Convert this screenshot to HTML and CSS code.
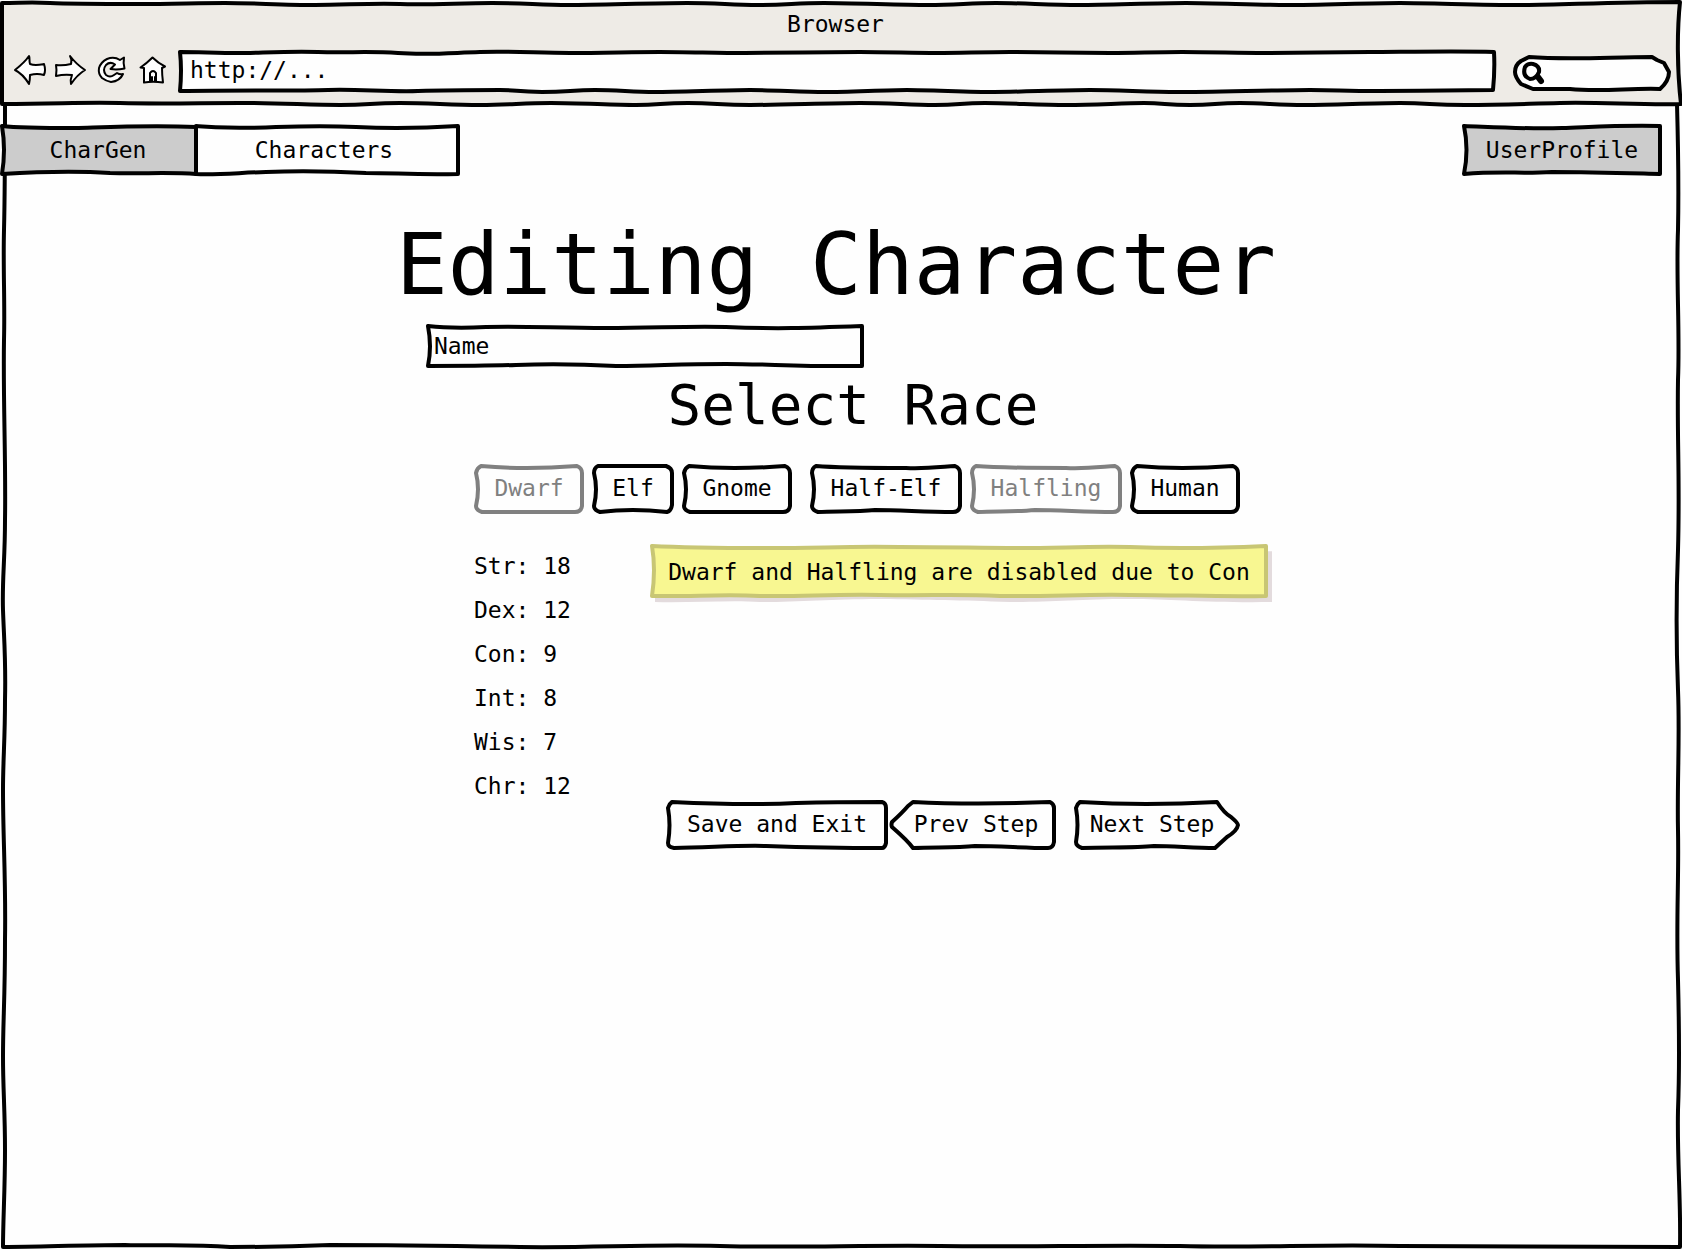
FILE: index.html
```html
<!DOCTYPE html>
<html lang="en">
<head>
<meta charset="utf-8">
<title>Editing Character</title>
<link rel="stylesheet" href="styles.css">
</head>
<body>
<header class="chrome">
  <svg class="sketch chrome-edge" viewBox="0 0 1682 104" preserveAspectRatio="none" aria-hidden="true"><path d="M2 3C20 3 30 2 50 3S110 4 140 4S200 3 225 3S285 5 315 5S370 3 400 4S460 3 492 3S540 5 569 5S655 3 687 3S730 5 759 5S795 3 824 3S900 5 928 5S970 3 996 3S1050 5 1079 5S1155 3 1186 3S1255 5 1287 5S1370 3 1400 3S1480 5 1520 5S1610 2 1680 2C1677 30 1677 70 1681 104C1640 105 1600 102 1560 103S1500 105 1465 105S1430 103 1400 103S1335 105 1305 105S1265 103 1240 103S1215 105 1190 105S1165 103 1144 103S1095 105 1067 105S1010 103 985 103S960 105 935 105S890 103 860 103S780 105 750 105S715 103 688 103S660 105 636 105S580 103 551 103S510 105 480 105S430 103 400 103S370 105 340 105S280 103 240 103S160 104 120 103S60 104 2 104Z"/></svg>
  <div class="chrome-title">Browser</div>
  <div class="toolbar">
    <button class="tool" type="button" aria-label="Back"><svg viewBox="14 55 32 32"><path d="M15 69C20 65 25 61 29 55C30 57 29 60 30 63C35 65 39 64 44 63Q46 69 44 74Q37 72 30 74Q30 79 29 83Q23 73 15 69Z"/></svg></button>
    <button class="tool" type="button" aria-label="Forward"><svg viewBox="55 55 32 32"><path d="M56 64Q63 65 71 63Q72 58 70 55Q76 63 85 69Q77 74 71 83Q70 79 72 74Q64 73 56 75Q57 69 56 64Z"/></svg></button>
    <button class="tool" type="button" aria-label="Reload"><svg viewBox="96 55 32 32"><path d="M123 73Q120 80 111 81Q106 80 102 77Q98 73 99 67Q101 61 107 58Q114 55 120 59L124 56.500Q123 62 124.500 67.500Q117 69 110.500 68L115 63.500Q110 60 106 64Q102 69 106 74Q110 77 114 74L117 72Q120 74 123 73Z"/></svg></button>
    <button class="tool" type="button" aria-label="Home"><svg viewBox="137 55 32 32"><path d="M140.500 66.500Q147 62 152.500 56.500Q158 62 165 65.500L162 67Q162 74 163 81.500Q153 80 144 81.500Q144 74 144 67ZM150 81V72Q153 68 156 72V81M152 81V76M155 81V76"/></svg></button>
    <div class="url">
      <svg class="sketch" viewBox="0 0 1319 43" preserveAspectRatio="none" aria-hidden="true"><path d="M2 2C20 2 40 3 60 3S110 1 140 2S190 1 220 3S270 3 302 2S360 3 392 3S455 2 482 2S540 3 567 3S655 2 682 2S735 3 759 3S805 2 832 2S905 3 932 3S975 2 1004 2S1060 3 1087 3S1165 2 1192 2S1280 1 1316 2Q1317 20 1315 40C1290 40 1240 41 1202 41S1160 40 1132 40S1030 42 1000 42S940 40 912 40S840 42 816 42S750 40 729 40S670 42 647 42S595 40 572 40S500 42 477 42S440 40 417 40S390 42 364 42S340 40 322 40S270 40 240 41S180 39 150 40S60 40 2 41Q4 20 2 2Z"/></svg>
      <input type="text" value="http://..." aria-label="Address">
    </div>
    <div class="search">
      <svg class="sketch" viewBox="1513 54 158 36" preserveAspectRatio="none" aria-hidden="true"><path d="M1529 56C1570 59 1610 56 1652 56L1657 59L1664 62L1669 71Q1669 80 1660 88C1630 87 1600 91 1570 88Q1550 88 1533 88L1521 83Q1515 76 1515 71Q1515 64 1521 60Z"/></svg>
      <svg class="lens" viewBox="1521 60 24 24" aria-hidden="true"><path d="M1525 66Q1528 62 1533 63Q1540 65 1539 71Q1536 78 1530 78Q1522 75 1525 66Z"/><path class="handle" d="M1538 76L1541 80"/></svg>
      <input type="search" aria-label="Search">
    </div>
  </div>
</header>
<main class="page">
  <svg class="sketch page-edge" viewBox="0 104 1682 1146" preserveAspectRatio="none" aria-hidden="true"><path d="M5 104C5 160 5 190 4 230C3 270 5 300 4 340C3 400 6 460 5 520C5 560 2 580 3 610C4 640 6 660 5 700C5 740 3 760 3 790C3 840 6 880 5 940C5 1000 3 1020 3 1056C3 1090 5 1110 5 1150C5 1190 3 1220 3 1247C40 1247 80 1245 125 1245C160 1246 190 1244 230 1247C260 1247 280 1247 330 1245C400 1245 460 1246 520 1247C600 1248 640 1244 720 1246C800 1248 860 1245 940 1246C1020 1247 1100 1245 1180 1246C1260 1248 1320 1244 1400 1246C1500 1247 1600 1246 1680 1247C1681 1200 1677 1160 1678 1110C1680 1060 1679 1020 1678 980C1676 920 1679 880 1678 830C1677 780 1680 740 1678 690C1676 640 1676 600 1678 550C1680 480 1677 440 1678 380C1680 330 1676 280 1678 230C1679 180 1678 140 1677 104"/></svg>
  <nav class="nav">
    <a class="tab tab-current" href="#"><svg class="sketch" viewBox="0 0 196 51" preserveAspectRatio="none" aria-hidden="true"><path d="M2 2C20 4 50 4 75 4C110 3 150 1 196 3V49C170 47 140 49 110 48C80 46 50 46 2 49Q6 25 2 2Z"/></svg>CharGen</a>
    <a class="tab tab-wide" href="#"><svg class="sketch" viewBox="0 0 264 51" preserveAspectRatio="none" aria-hidden="true"><path d="M0 2C20 3 50 5 80 3C110 2 140 2 160 3C200 5 230 4 262 2V49C220 50 200 48 170 48C130 46 100 46 70 47C40 48 20 50 0 49Z"/></svg>Characters</a>
    <a class="tab tab-user" href="#"><svg class="sketch" viewBox="0 0 200 51" preserveAspectRatio="none" aria-hidden="true"><path d="M2 2C30 3 60 5 100 4C130 3 160 1 198 2V49C160 48 130 47 90 47C60 49 40 46 2 49Q7 25 2 2Z"/></svg>UserProfile</a>
  </nav>
  <form class="sheet">
    <h1>Editing Character</h1>
    <div class="name">
      <svg class="sketch" viewBox="0 0 438 44" preserveAspectRatio="none" aria-hidden="true"><path d="M2 2C20 4 40 4 60 3C100 2 130 4 180 4C230 4 260 2 300 3C350 5 380 4 436 2V41C380 42 340 39 300 39C250 39 230 41 190 41C150 39 120 39 90 40C60 41 30 41 2 41Q6 22 2 2Z"/></svg>
      <input type="text" value="Name" aria-label="Character name">
    </div>
    <h2>Select Race</h2>
    <div class="races">
      <div class="race-group">
        <button class="btn btn-m" type="button" disabled><svg class="sketch" viewBox="0 0 110 50" preserveAspectRatio="none" aria-hidden="true"><path d="M7 2Q50 6 103 2Q108 4 108 9V42Q107 48 101 48H8Q2 46 2 42Q6 25 2 9Q3 4 7 2Z"/></svg>Dwarf</button>
        <button class="btn btn-s" type="button"><svg class="sketch" viewBox="0 0 82 50" preserveAspectRatio="none" aria-hidden="true"><path d="M6 2H74Q80 4 80 9V41Q79 47 75 48Q40 44 8 48Q2 46 2 42Q6 25 2 9Q2 4 6 2Z"/></svg>Elf</button>
        <button class="btn btn-m" type="button"><svg class="sketch" viewBox="0 0 110 50" preserveAspectRatio="none" aria-hidden="true"><path d="M7 2Q50 6 103 2Q108 4 108 9V42Q107 48 101 48H8Q2 46 2 42Q6 25 2 9Q3 4 7 2Z"/></svg>Gnome</button>
      </div>
      <div class="race-group">
        <button class="btn btn-l" type="button"><svg class="sketch" viewBox="0 0 152 50" preserveAspectRatio="none" aria-hidden="true"><path d="M6 2C30 4 60 4 96 4C115 5 130 3 145 2Q150 4 150 9V42Q149 48 143 48C115 48 90 46 65 46C45 48 25 47 8 48Q2 46 2 42Q6 25 2 9Q2 4 6 2Z"/></svg>Half-Elf</button>
        <button class="btn btn-l" type="button" disabled><svg class="sketch" viewBox="0 0 152 50" preserveAspectRatio="none" aria-hidden="true"><path d="M6 2C30 4 60 4 96 4C115 5 130 3 145 2Q150 4 150 9V42Q149 48 143 48C115 48 90 46 65 46C45 48 25 47 8 48Q2 46 2 42Q6 25 2 9Q2 4 6 2Z"/></svg>Halfling</button>
        <button class="btn btn-m" type="button"><svg class="sketch" viewBox="0 0 110 50" preserveAspectRatio="none" aria-hidden="true"><path d="M7 2Q50 6 103 2Q108 4 108 9V42Q107 48 101 48H8Q2 46 2 42Q6 25 2 9Q3 4 7 2Z"/></svg>Human</button>
      </div>
    </div>
    <div class="details">
      <ul class="stats">
        <li>Str: 18</li>
        <li>Dex: 12</li>
        <li>Con: 9</li>
        <li>Int: 8</li>
        <li>Wis: 7</li>
        <li>Chr: 12</li>
      </ul>
      <div class="side">
        <p class="note"><svg class="sketch" viewBox="0 0 618 54" preserveAspectRatio="none" aria-hidden="true"><path class="note-shadow" d="M5 7H622V57C560 58 520 54 480 54C430 54 400 57 360 57C310 55 280 55 230 54C180 54 150 57 110 57C80 55 40 58 5 57Z"/><path class="note-paper" d="M2 2C40 4 80 4 120 4C170 4 200 2 250 3C300 3 330 4 370 4C410 4 440 2 480 3C530 5 570 4 616 2V51C570 52 530 50 480 50C430 49 400 52 350 51C300 49 280 51 230 50C180 49 150 52 110 51C70 49 40 52 2 51Q6 25 2 2Z"/></svg>Dwarf and Halfling are disabled due to Con</p>
        <div class="actions">
          <button class="btn btn-xl" type="submit"><svg class="sketch" viewBox="0 0 222 50" preserveAspectRatio="none" aria-hidden="true"><path d="M6 2C50 4 90 5 130 3Q170 2 216 2Q220 3 220 8V43Q219 48 216 48C170 48 130 47 100 46C70 45 40 48 8 48Q2 47 2 43Q5 25 2 8Q3 4 6 2Z"/></svg>Save and Exit</button>
          <button class="btn btn-prev" type="button"><svg class="sketch" viewBox="0 0 166 50" preserveAspectRatio="none" aria-hidden="true"><path d="M23 2Q85 5 160 2Q164 4 164 8V42Q163 48 158 48C135 48 110 46 85 46C65 48 45 47 23 48Q18 41 2 27Q1 25 2 22Q12 13 18 6Z"/></svg>Prev Step</button>
          <button class="btn btn-next" type="button"><svg class="sketch" viewBox="0 0 166 50" preserveAspectRatio="none" aria-hidden="true"><path d="M6 2Q70 6 143 2Q150 13 157 17Q164 23 164 25Q163 31 153 37L141 48C120 48 100 46 80 46C60 48 35 47 8 48Q2 46 2 42Q5 25 2 8Q3 4 6 2Z"/></svg>Next Step</button>
        </div>
      </div>
    </div>
  </form>
</main>
</body>
</html>
```
FILE: styles.css
```css
* { box-sizing: border-box; }

body {
  margin: 0;
  min-height: 100vh;
  display: flex;
  flex-direction: column;
  background: #fefefe;
  color: #000;
  font: 23px/28px "DejaVu Sans Mono", monospace;
}

button, input {
  font: inherit;
  color: inherit;
  background: none;
  border: 0;
  margin: 0;
  padding: 0;
  outline: 0;
}

/* Hand-drawn outline, stretched behind its parent */
.sketch {
  position: absolute;
  inset: 0;
  z-index: -1;
  width: 100%;
  height: 100%;
  overflow: visible;
  fill: #fefefe;
  stroke: #000;
  stroke-width: 4;
  stroke-linejoin: round;
}
.sketch path { vector-effect: non-scaling-stroke; }

.chrome, .page, .url, .search, .tab, .name, .btn, .note {
  position: relative;
  isolation: isolate;
}

/* Browser bar */
.chrome {
  z-index: 1;
  height: 104px;
  padding: 10px 11px 0 14px;
}
.chrome-edge { fill: #eeebe6; }
.chrome-title {
  padding-right: 14px;
  text-align: center;
}
.toolbar {
  display: flex;
  align-items: center;
  gap: 9px;
  margin-top: 12px;
}
.tool {
  width: 32px;
  height: 32px;
}
.tool svg {
  display: block;
  overflow: visible;
  fill: #fefefe;
  stroke: #000;
  stroke-width: 2;
  stroke-linejoin: round;
  stroke-linecap: round;
}
.url {
  flex: 1;
  height: 43px;
}
.url input {
  width: 100%;
  height: 40px;
  padding: 0 12px;
}
.search {
  display: flex;
  align-items: center;
  width: 158px;
  height: 36px;
  margin: 2px 0 0 7px;
  padding: 0 12px 0 8px;
}
.search input {
  flex: 1;
  min-width: 0;
}
.lens {
  width: 24px;
  height: 24px;
  fill: none;
  stroke: #000;
  stroke-width: 4;
}
.handle {
  stroke-width: 6;
  stroke-linecap: round;
}

/* Page */
.page {
  flex: 1;
  padding: 20px 0 40px;
}
.page-edge { fill: none; }

.nav {
  display: flex;
  padding-right: 20px;
}
.tab {
  width: 196px;
  height: 52px;
  line-height: 52px;
  text-align: center;
  color: inherit;
  text-decoration: none;
}
.tab-wide {
  width: 264px;
  padding-right: 8px;
}
.tab-user {
  width: 200px;
  margin-left: auto;
}
.tab-current .sketch, .tab-user .sketch { fill: #ccc; }

.sheet {
  width: 884px;
  margin: 38px auto 0;
  position: relative;
  right: 5px;
}
h1, h2 {
  margin: 0;
  font-weight: normal;
  text-align: center;
  white-space: nowrap;
}
h1 {
  font-size: 86px;
  line-height: 100px;
}
h2 {
  margin-top: 4px;
  padding-left: 34px;
  font-size: 56px;
  line-height: 64px;
}
.name {
  width: 438px;
  height: 45px;
  margin: 10px 0 0 32px;
}
.name input {
  width: 100%;
  height: 44px;
  padding: 0 8px;
}
.races {
  display: flex;
  gap: 18px;
  margin: 27px 0 0 80px;
}
.race-group {
  display: flex;
  gap: 8px;
}
.btn {
  height: 50px;
  padding-bottom: 2px;
  white-space: nowrap;
}
.btn:disabled { color: #808080; }
.btn:disabled .sketch { stroke: #808080; }
.btn-s { width: 82px; }
.btn-m { width: 110px; }
.btn-l { width: 152px; }
.btn-xl { width: 222px; }

.details {
  display: flex;
  margin: 30px 0 0 80px;
}
.stats {
  width: 176px;
  margin: 0;
  padding: 0;
  list-style: none;
  line-height: 44px;
}
.note {
  width: 618px;
  height: 55px;
  margin: 0;
  line-height: 56px;
  text-align: center;
  white-space: nowrap;
}
.note .note-paper {
  fill: #f8f791;
  stroke: #c8c674;
}
.note .note-shadow {
  fill: #e3dbdd;
  stroke: none;
}
.actions {
  display: flex;
  margin: 201px 0 0 16px;
}
.btn-prev {
  width: 166px;
  margin-left: 2px;
  padding-left: 6px;
}
.btn-next {
  width: 166px;
  margin-left: 18px;
  padding-right: 10px;
}
```
